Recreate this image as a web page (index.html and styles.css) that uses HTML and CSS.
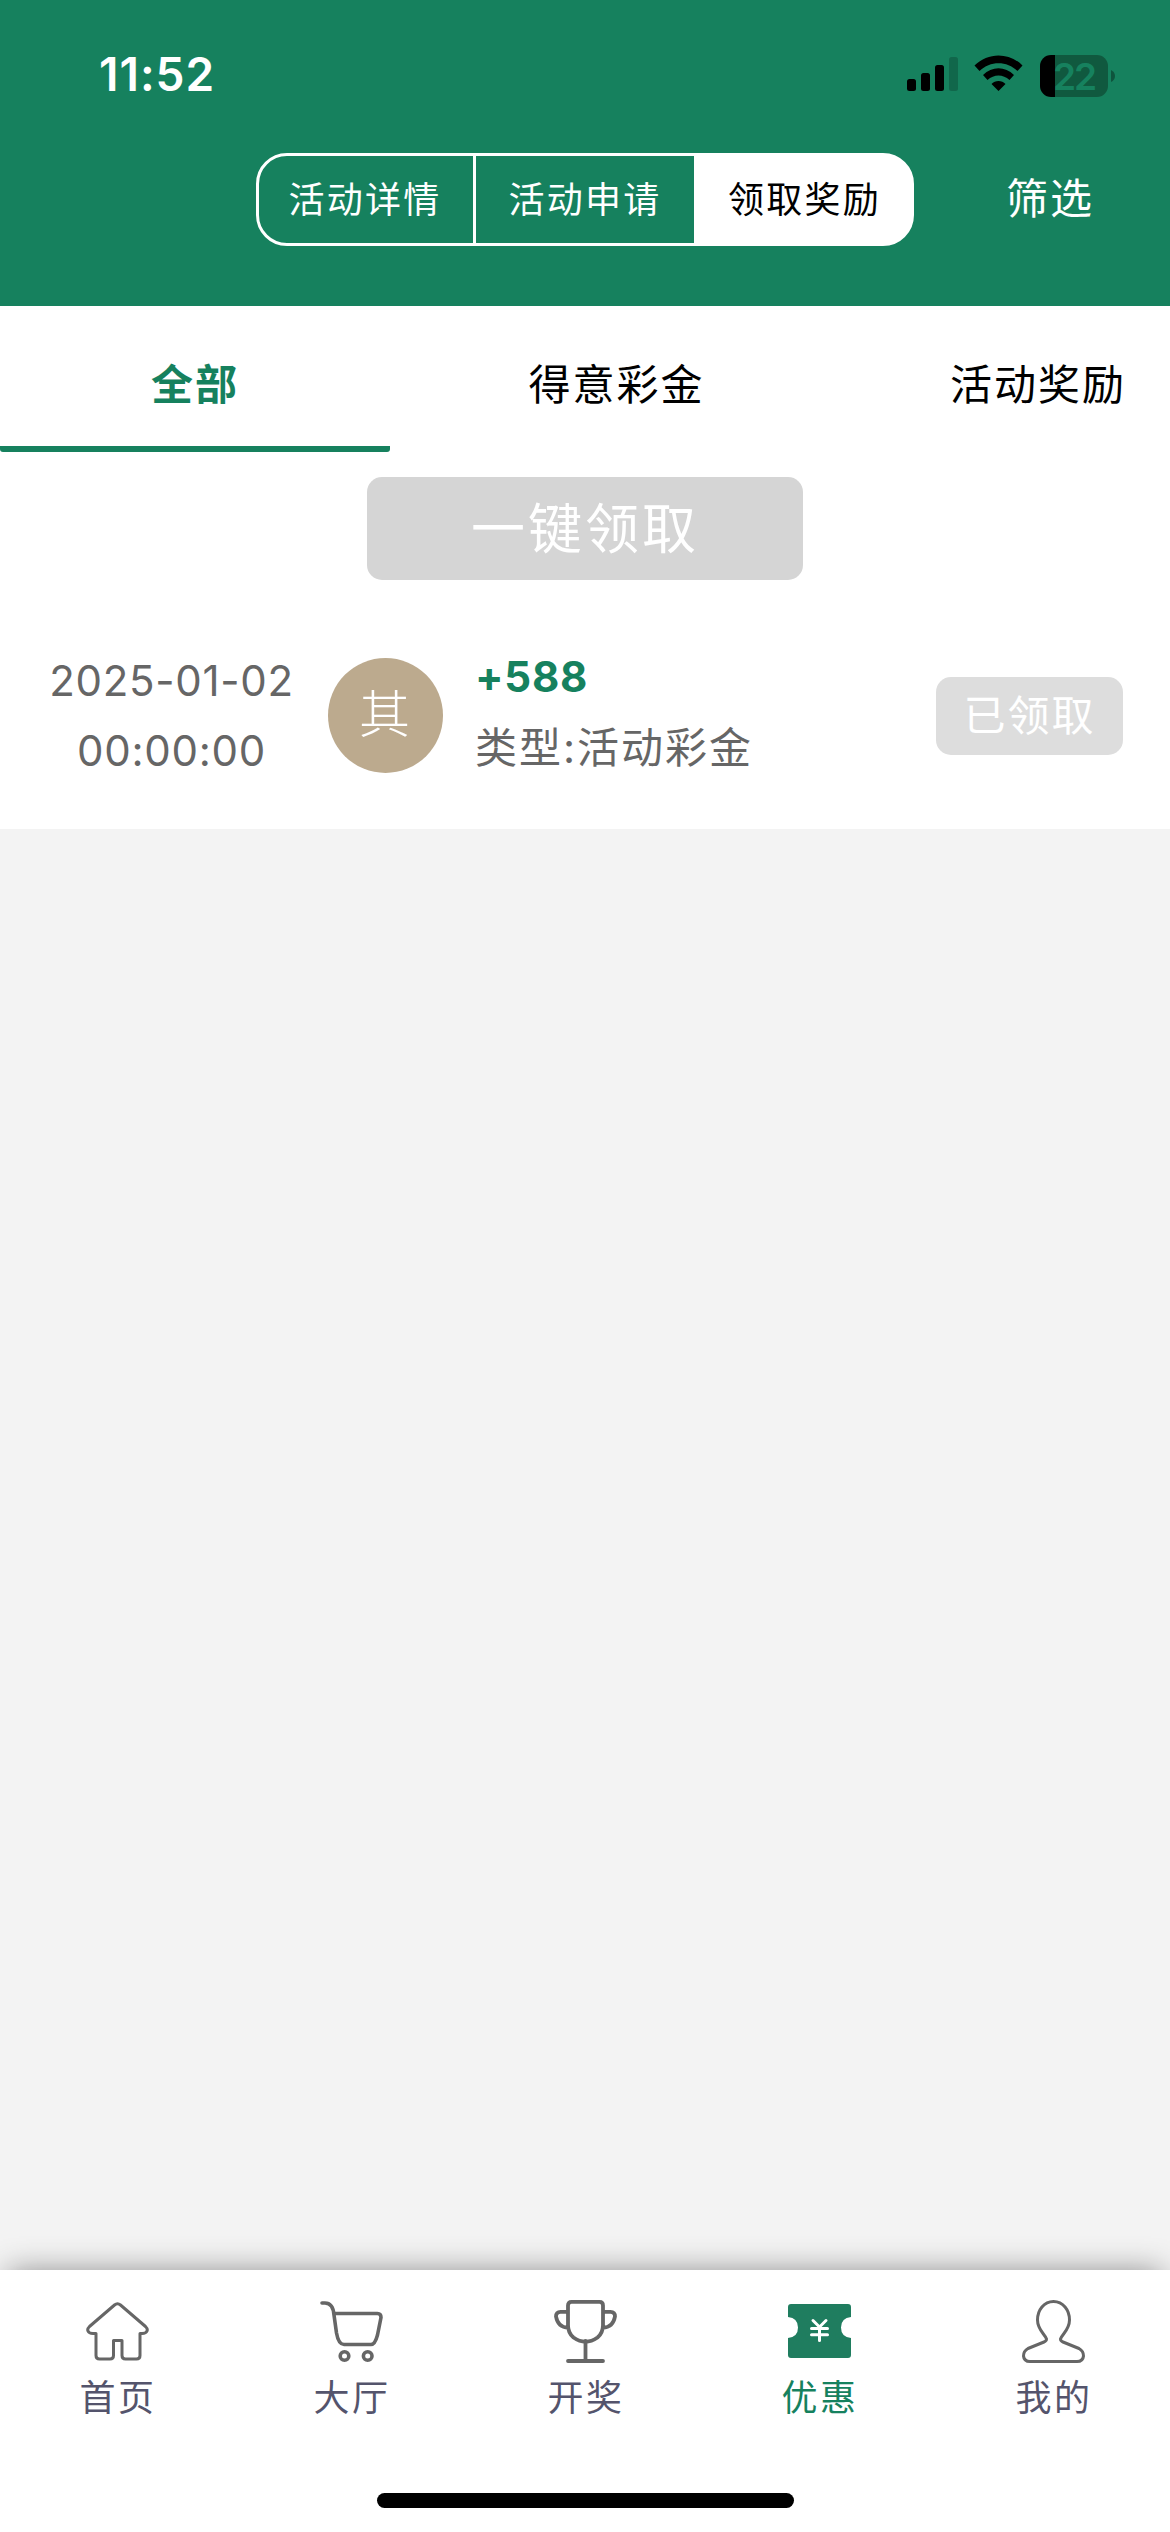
FILE: index.html
```html
<!DOCTYPE html>
<html lang="zh-CN">
<head>
<meta charset="utf-8">
<title>领取奖励</title>
<link rel="stylesheet" href="styles.css">
</head>
<body>
<div class="app">
  <header class="header">
    <div class="status">
      <span class="clock">11:52</span>
      <div class="status-icons">
        <svg class="signal" width="51" height="38" viewBox="0 0 51 38">
          <rect x="0" y="22" width="9" height="12" rx="2.5"/>
          <rect x="14" y="16" width="9" height="18" rx="2.5"/>
          <rect x="28" y="8" width="9" height="26" rx="2.5"/>
          <rect x="42" y="0" width="9" height="34" rx="2.5" opacity=".2"/>
        </svg>
        <svg class="wifi" width="49" height="38" viewBox="0 0 49 38">
          <path d="M0.5 10.5C14-3 35-3 48.500 10.500L43.500 16C33 5.500 16 5.500 5.500 16ZM9 20C18 11 31 11 40 20L35.500 25C29 19 20 19 13.500 25ZM17.500 29C21 25 28 25 31.500 29L24.500 36Z"/>
        </svg>
        <div class="battery"><span class="battery-text">22</span></div>
        <svg class="battery-cap" width="4" height="12" viewBox="0 0 4 12"><path d="M0 0Q4 2 4 6Q4 10 0 12Z" opacity=".35"/></svg>
      </div>
    </div>
    <nav class="toolbar">
      <div class="segments">
        <span class="segment segment-first">活动详情</span>
        <span class="segment">活动申请</span>
        <span class="segment segment-on">领取奖励</span>
      </div>
      <span class="filter">筛选</span>
    </nav>
  </header>

  <main class="panel">
    <div class="tabs">
      <span class="tab tab-on">全部</span>
      <span class="tab tab-wide">得意彩金</span>
      <span class="tab">活动奖励</span>
    </div>
    <button class="claim-all">一键领取</button>
    <div class="record">
      <div class="date"><span>2025-01-02</span><span>00:00:00</span></div>
      <div class="avatar">其</div>
      <div class="info"><span class="amount">+588</span><span class="type">类型:活动彩金</span></div>
      <span class="claimed">已领取</span>
    </div>
  </main>

  <footer class="footer">
    <nav class="nav">
      <a class="nav-item">
        <svg class="icon" viewBox="0 0 63 63"><path stroke-width="3" d="M28.500 5Q31.500 2.500 34.500 5L59.500 26.500Q62 29 61 31Q60 33.500 56 33.500H54V55.500Q54 59 50.500 59H39.500Q36 59 36 55.500V40.500H27.500V55.500Q27.500 59 24 59H13.500Q10 59 10 55.500V33.500H7Q3 33.500 2 31Q1 29 3.500 26.500Z"/></svg>
        <span>首页</span>
      </a>
      <a class="nav-item">
        <svg class="icon" viewBox="0 0 63 63"><path stroke-width="3.600" d="M2 3H5Q13 3 14 15L16.500 33Q18.500 44.500 24 44.500H51Q55 44.500 57.500 35L61 17.500Q61 13.500 57.500 13.500H14.500"/><circle cx="24.500" cy="56" r="4.300" stroke-width="3.600"/><circle cx="47.700" cy="56" r="4.300" stroke-width="3.600"/></svg>
        <span>大厅</span>
      </a>
      <a class="nav-item">
        <svg class="icon" viewBox="0 0 63 63"><path stroke-width="3.800" d="M17.500 1.900H45.500Q49 1.900 49 5.500V25Q49 33 43.500 37.500Q31.500 46 19.500 37.500Q14 33 14 25V5.500Q14 1.900 17.500 1.900ZM14 11.800H6.500Q2 11.800 2 16.500Q4 27.500 14 27.700M49 11.800H56.500Q61 11.800 61 16.500Q59 27.500 49 27.700M31.500 41V60.500M14 61H49"/></svg>
        <span>开奖</span>
      </a>
      <a class="nav-item nav-item-on">
        <svg class="icon" viewBox="0 0 63 63"><path class="ticket" d="M3 4H60Q63 4 63 7V17Q53 18 53 27.500T63 38V55Q63 58 60 58H3Q0 58 0 55V38Q10 37 10 27.500T0 17V7Q0 4 3 4Z"/><path class="yen" d="M25 20.500L31.500 27L38 20.500M31.500 27V40.500M23.500 28.500H39.500M23.500 34.700H39.500"/></svg>
        <span>优惠</span>
      </a>
      <a class="nav-item">
        <svg class="icon" viewBox="0 0 63 63"><path stroke-width="3" d="M31.500 1.500C22 1.500 15.500 10 15.500 20C15.500 30 23 34 24.500 39Q24.500 41 22 42L6 48.500Q1.500 51 1.500 56Q2 61.500 8 61.500H55Q61 61.500 61.500 56Q61.500 51 57 48.500L41 42Q38.500 41 38.500 39C40 34 47.500 30 47.500 20C47.500 10 41 1.500 31.500 1.500Z"/></svg>
        <span>我的</span>
      </a>
    </nav>
    <div class="home-bar"></div>
  </footer>
</div>
</body>
</html>
```
FILE: styles.css
```css
* { box-sizing: border-box; }

body {
  margin: 0;
  background: #f3f3f3;
  font-family: Inter, "Noto Sans CJK SC", sans-serif;
  font-size: 42px;
  letter-spacing: 2px;
  color: #000;
}

.app {
  width: 1170px;
  height: 2532px;
  display: flex;
  flex-direction: column;
  overflow: hidden;
}

.header {
  height: 306px;
  background: #16815e;
  color: #fff;
}

.status {
  height: 153px;
  padding: 46px 55px 0 99px;
  display: flex;
  justify-content: space-between;
  align-items: flex-start;
}

.clock {
  font-size: 46px;
  font-weight: 600;
  line-height: 57px;
  letter-spacing: 1px;
}

.status-icons {
  display: flex;
  padding-top: 9px;
}

.signal { margin: 2px 16px 0 0; }
.wifi { margin: 0 17px 0 0; }

.battery {
  width: 68px;
  height: 42px;
  border-radius: 11px;
  background: linear-gradient(90deg, #000 15px, #10593f 15px);
  text-align: center;
}

.battery-text {
  display: block;
  color: #16815e;
  font-size: 37px;
  font-weight: 600;
  line-height: 43px;
  letter-spacing: -2px;
}

.battery-cap { margin: 15px 0 0 3px; }

.toolbar {
  display: flex;
  align-items: flex-start;
  padding-left: 256px;
}

.segments {
  width: 658px;
  height: 93px;
  display: grid;
  grid-template-columns: 217px 218px 1fr;
  border: 3px solid #fff;
  border-radius: 31px;
  background: linear-gradient(90deg, transparent 438px, #fff 438px) border-box;
}

.segment {
  font-size: 36px;
  line-height: 89px;
  letter-spacing: 2.2px;
  text-align: center;
}

.segment-first {
  padding-right: 2px;
  border-right: 3px solid #fff;
}

.segment-on {
  padding-left: 4px;
  color: #000;
}

.filter {
  margin-left: 92px;
  line-height: 92px;
}

.panel {
  height: 523px;
  background: #fff;
  display: flex;
  flex-direction: column;
  align-items: center;
}

.tabs {
  width: 1170px;
  height: 146px;
  display: flex;
  overflow: hidden;
}

.tab {
  flex: 0 0 390px;
  line-height: 157px;
  text-align: center;
}

.tab-wide { flex-basis: 453px; }

.tab-on {
  color: #16815e;
  font-weight: 700;
  border-radius: 0 0 3px 3px;
  background: linear-gradient(#16815e, #16815e) bottom / 100% 6px no-repeat;
}

.claim-all {
  width: 436px;
  height: 103px;
  margin: 25px 0 0;
  padding: 2px 0 0;
  border: 0;
  border-radius: 15px;
  background: #d5d5d5;
  color: #fff;
  font: inherit;
  font-size: 54px;
  line-height: 101px;
  letter-spacing: 3px;
}

.record {
  width: 1170px;
  height: 249px;
  padding: 22px 47px 0 50px;
  display: flex;
  align-items: center;
  color: #666;
}

.date {
  width: 243px;
  display: flex;
  flex-direction: column;
  align-items: center;
  line-height: 70px;
  letter-spacing: .7px;
  white-space: nowrap;
}

.avatar {
  width: 115px;
  height: 115px;
  margin-left: 35px;
  border-radius: 50%;
  background: #bcaa8e;
  color: #fff;
  font-size: 51px;
  font-weight: 300;
  line-height: 114px;
  text-align: center;
}

.info {
  margin: 0 0 8px 32px;
  display: flex;
  flex-direction: column;
  line-height: 71px;
}

.amount {
  color: #16815e;
  font-weight: 700;
  letter-spacing: .8px;
}

.claimed {
  width: 187px;
  height: 78px;
  margin-left: auto;
  border-radius: 15px;
  background: #ddd;
  color: #fff;
  line-height: 77px;
  text-align: center;
}

.footer {
  height: 262px;
  margin-top: auto;
  padding-top: 30px;
  background: #fff;
  box-shadow: 0 -6px 30px -8px rgba(0, 0, 0, .45);
  display: flex;
  flex-direction: column;
  align-items: center;
}

.nav {
  width: 1170px;
  display: grid;
  grid-template-columns: repeat(5, 1fr);
}

.nav-item {
  display: flex;
  flex-direction: column;
  align-items: center;
  font-size: 36px;
  line-height: 70px;
  letter-spacing: 2.4px;
  color: #54546c;
}

.nav-item span { padding-left: 2px; }

.nav-item-on { color: #16815e; }

.icon {
  width: 63px;
  height: 63px;
  fill: none;
  stroke: #666;
  stroke-linecap: round;
  stroke-linejoin: round;
}

.ticket {
  fill: #1f7d5f;
  stroke: none;
}

.yen {
  stroke: #fff;
  stroke-width: 3;
}

.home-bar {
  width: 417px;
  height: 15px;
  margin-top: 60px;
  border-radius: 8px;
  background: #000;
}
```
